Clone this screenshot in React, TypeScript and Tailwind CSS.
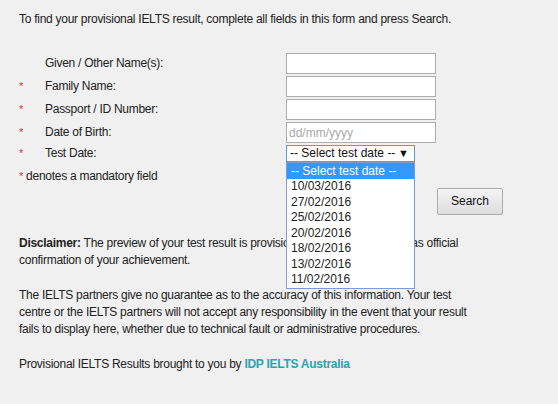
import React from 'react';

const dates = [
  '10/03/2016',
  '27/02/2016',
  '25/02/2016',
  '20/02/2016',
  '18/02/2016',
  '13/02/2016',
  '11/02/2016',
];

const Row = ({
  label,
  required,
  children,
}: {
  label: string;
  required?: boolean;
  children: React.ReactNode;
}) => (
  <div className="flex items-center h-[21px] mb-[2px]">
    <span className="w-[26px] text-[#e0343a] text-[11px]">{required ? '*' : ''}</span>
    <span className="w-[241px]">{label}</span>
    {children}
  </div>
);

const App = () => {
  return (
    <div
      className="w-[558px] h-[404px] bg-[#f0f0f0] text-[#222] text-[12px] leading-[17px] tracking-[-0.27px] pl-[19px] pt-[11px]"
      style={{ fontFamily: '"Liberation Sans", Arial, sans-serif' }}
    >
      <p>To find your provisional IELTS result, complete all fields in this form and press Search.</p>

      {/* Form */}
      <div className="mt-[25px]">
        <Row label="Given / Other Name(s):">
          <input className="w-[150px] h-[21px] bg-white border border-[#adadad] outline-none" />
        </Row>
        <Row label="Family Name:" required>
          <input className="w-[150px] h-[21px] bg-white border border-[#adadad] outline-none" />
        </Row>
        <Row label="Passport / ID Number:" required>
          <input className="w-[150px] h-[21px] bg-white border border-[#adadad] outline-none" />
        </Row>
        <Row label="Date of Birth:" required>
          <input
            placeholder="dd/mm/yyyy"
            className="w-[150px] h-[21px] bg-white border border-[#adadad] outline-none px-[2px] tracking-normal placeholder:text-[#a9a9a9]"
          />
        </Row>
        <div className="flex items-center h-[17px] mt-[1px]">
          <span className="w-[26px] text-[#e0343a] text-[11px]">*</span>
          <span className="w-[241px]">Test Date:</span>
          <div className="relative tracking-normal">
            <div className="w-[129px] h-[17px] bg-white border border-[#569de5] flex items-center justify-between pl-[3px] pr-[5px] text-[#111]">
              <span>-- Select test date --</span>
              <span className="text-[11px] leading-none">▼</span>
            </div>
            {/* Open dropdown list */}
            <div className="absolute left-0 top-[17px] w-[129px] bg-white border border-[#7a9cd3] text-[#222] z-10">
              <div className="h-[16px] leading-[16px] bg-[#3399ff] text-white pl-[4px]">-- Select test date --</div>
              {dates.map((d) => (
                <div key={d} className="h-[15.5px] leading-[15px] pl-[4px]">
                  {d}
                </div>
              ))}
            </div>
          </div>
        </div>
      </div>

      <p className="mt-[6px]">
        <span className="text-[#e0343a] text-[11px]">*</span> denotes a mandatory field
      </p>

      <div className="flex pl-[418px] mt-[3px]">
        <button className="w-[66px] h-[27px] rounded-[2px] border border-[#acacac] bg-gradient-to-b from-[#f4f4f4] to-[#dedede] text-[#111] tracking-normal">
          Search
        </button>
      </div>

      <p className="mt-[20px] w-[455px]">
        <b>Disclaimer:</b> The preview of your test result is provisional and cannot be used as official confirmation of
        your achievement.
      </p>

      <p className="mt-[18px] w-[455px]">
        The IELTS partners give no guarantee as to the accuracy of this information. Your test centre or the IELTS
        partners will not accept any responsibility in the event that your result fails to display here, whether due to
        technical fault or administrative procedures.
      </p>

      <p className="mt-[18px]">
        Provisional IELTS Results brought to you by{' '}
        <a className="text-[#2aa3b0] font-bold">IDP IELTS Australia</a>
      </p>
    </div>
  );
};

export default App;
